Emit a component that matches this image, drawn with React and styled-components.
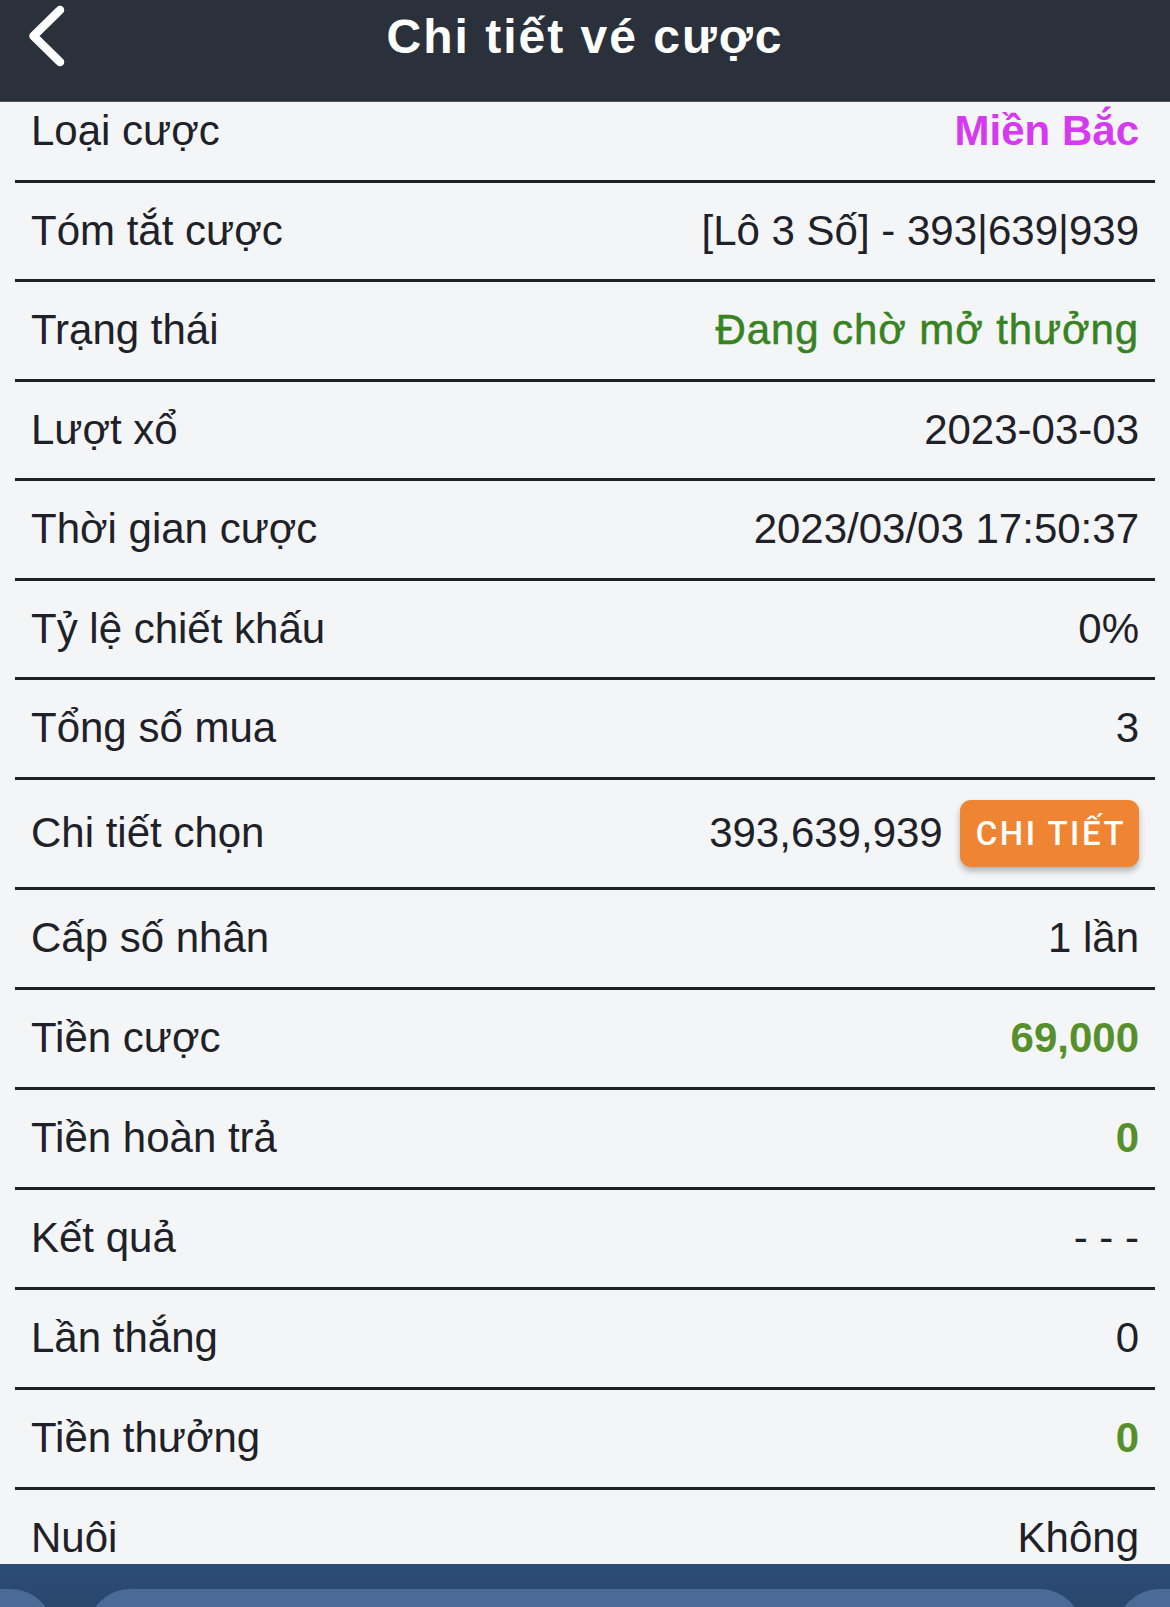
import React from "react";
import styled, { createGlobalStyle } from "styled-components";

const GlobalStyle = createGlobalStyle`
  html, body {
    margin: 0;
    padding: 0;
    background: #f4f5f7;
  }
  * { box-sizing: border-box; }
`;

const Page = styled.div`
  width: 1170px;
  height: 1607px;
  display: flex;
  flex-direction: column;
  overflow: hidden;
  background: #f4f5f7;
  font-family: "Liberation Sans", Arial, sans-serif;
  color: #1e2128;
`;

const Header = styled.header`
  position: relative;
  z-index: 2;
  flex: 0 0 102px;
  height: 102px;
  background: #2b313b;
  border-bottom: 1px solid #4d525a;
`;

const TopBar = styled.div`
  height: 74px;
  display: grid;
  grid-template-columns: 90px 1fr 90px;
  align-items: center;
`;

const BackIcon = styled.svg`
  display: block;
  width: 90px;
  height: 74px;
`;

const Title = styled.h1`
  margin: 0;
  text-align: center;
  color: #ffffff;
  font-family: "Liberation Sans", Arial, sans-serif;
  font-weight: 700;
  font-size: 48px;
  line-height: 1;
  letter-spacing: 2px;
`;

const ScrollArea = styled.main`
  flex: 1 1 auto;
  overflow: hidden;
`;

const List = styled.div`
  margin-top: -19px;
`;

const Row = styled.div`
  height: ${(p) => p.$h}px;
  margin: 0 15px;
  padding: 0 16px;
  border-bottom: 3px solid #1f2127;
  display: flex;
  align-items: center;
  justify-content: space-between;
  gap: 17px;
`;

const Label = styled.span`
  font-size: 42px;
  line-height: 1;
  color: #1e2128;
  white-space: nowrap;
`;

const toneColor = {
  pink: "#d53af0",
  status: "#378321",
  money: "#56902c",
  plain: "#1e2128",
};

const Value = styled.span`
  margin-left: auto;
  font-size: 42px;
  line-height: 1;
  white-space: nowrap;
  color: ${(p) => toneColor[p.$tone || "plain"]};
  font-weight: ${(p) => (p.$bold ? 700 : 400)};
  letter-spacing: ${(p) => (p.$tone === "status" ? "0.9px" : "0")};
  -webkit-text-stroke: ${(p) =>
    p.$tone === "status" ? `0.5px ${toneColor.status}` : "0"};
`;

const DetailButton = styled.button`
  flex: 0 0 auto;
  height: 67px;
  padding: 0 13px 0 16px;
  border: none;
  border-radius: 11px;
  background: #ef8533;
  color: #ffffff;
  font-family: Roboto, "Liberation Sans", sans-serif;
  font-weight: 500;
  font-size: 33px;
  letter-spacing: 2.5px;
  box-shadow: 0 4px 6px rgba(0, 0, 0, 0.28);
  cursor: pointer;
`;

const BottomBar = styled.nav`
  flex: 0 0 43px;
  height: 43px;
  overflow: hidden;
  background: linear-gradient(180deg, #2d4c76 0%, #29466e 100%);
  display: flex;
  justify-content: center;
  gap: 35px;
  padding-top: 25px;
`;

const Pill = styled.div`
  flex: 0 0 ${(p) => p.$w}px;
  height: 90px;
  border-radius: 42px;
  background: #4a6b96;
`;

const rows = [
  { label: "Loại cược", value: "Miền Bắc", tone: "pink", bold: true },
  { label: "Tóm tắt cược", value: "[Lô 3 Số] - 393|639|939" },
  { label: "Trạng thái", value: "Đang chờ mở thưởng", tone: "status" },
  { label: "Lượt xổ", value: "2023-03-03" },
  { label: "Thời gian cược", value: "2023/03/03 17:50:37" },
  { label: "Tỷ lệ chiết khấu", value: "0%" },
  { label: "Tổng số mua", value: "3" },
  { label: "Chi tiết chọn", value: "393,639,939", button: true },
  { label: "Cấp số nhân", value: "1 lần" },
  { label: "Tiền cược", value: "69,000", tone: "money", bold: true },
  { label: "Tiền hoàn trả", value: "0", tone: "money", bold: true },
  { label: "Kết quả", value: "- - -" },
  { label: "Lần thắng", value: "0" },
  { label: "Tiền thưởng", value: "0", tone: "money", bold: true },
  { label: "Nuôi", value: "Không" },
];

export default function App() {
  return (
    <>
      <GlobalStyle />
      <Page>
        <Header>
          <TopBar>
            <BackIcon viewBox="0 0 90 74" aria-label="Quay lại">
              <path
                d="M60 10 L33.5 36 L60 62"
                fill="none"
                stroke="#ffffff"
                strokeWidth="8.5"
                strokeLinecap="round"
                strokeLinejoin="round"
              />
            </BackIcon>
            <Title>Chi tiết vé cược</Title>
            <span />
          </TopBar>
        </Header>
        <ScrollArea>
          <List>
            {rows.map((r, i) => (
              <Row key={r.label} $h={r.button ? 110 : i < 7 ? 99.5 : 100}>
                <Label>{r.label}</Label>
                <Value $tone={r.tone} $bold={r.bold}>
                  {r.value}
                </Value>
                {r.button && <DetailButton>CHI TIẾT</DetailButton>}
              </Row>
            ))}
          </List>
        </ScrollArea>
        <BottomBar>
          <Pill $w={300} />
          <Pill $w={994} />
          <Pill $w={300} />
        </BottomBar>
      </Page>
    </>
  );
}
